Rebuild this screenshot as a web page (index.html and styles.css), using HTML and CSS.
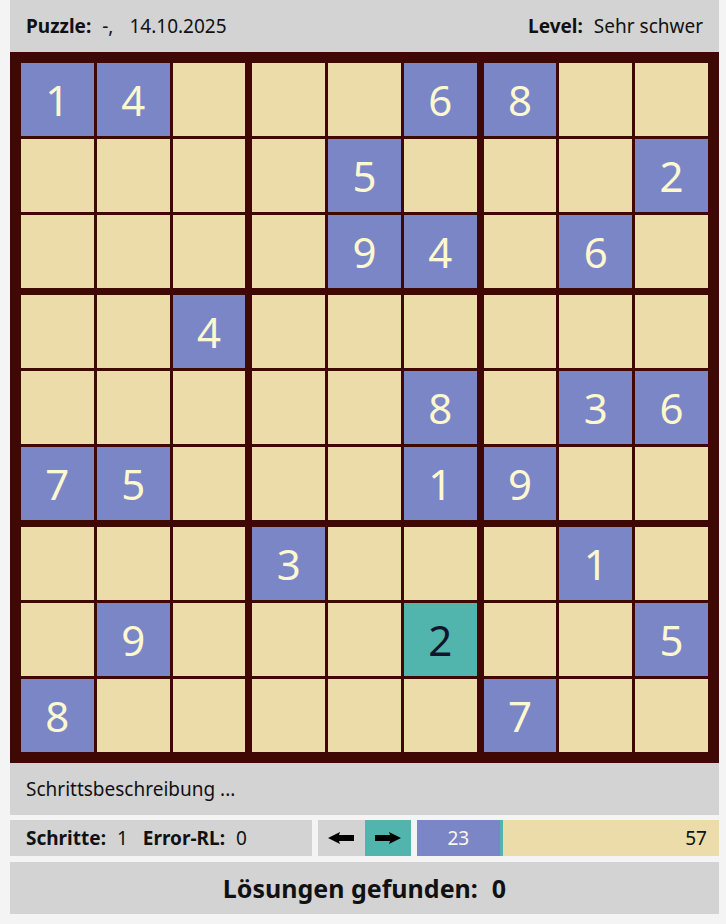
FILE: index.html
```html
<!DOCTYPE html>
<html lang="de">
<head>
<meta charset="utf-8">
<title>Sudoku</title>
<link rel="stylesheet" href="styles.css">
</head>
<body>
<div class="app">
  <header class="bar header">
    <div><b>Puzzle:</b><span class="val">-,</span><span class="val wide">14.10.2025</span></div>
    <div><b>Level:</b><span class="val">Sehr schwer</span></div>
  </header>

  <div class="board">
    <div class="box">
      <div class="cell given">1</div><div class="cell given">4</div><div class="cell"></div>
      <div class="cell"></div><div class="cell"></div><div class="cell"></div>
      <div class="cell"></div><div class="cell"></div><div class="cell"></div>
    </div>
    <div class="box">
      <div class="cell"></div><div class="cell"></div><div class="cell given">6</div>
      <div class="cell"></div><div class="cell given">5</div><div class="cell"></div>
      <div class="cell"></div><div class="cell given">9</div><div class="cell given">4</div>
    </div>
    <div class="box">
      <div class="cell given">8</div><div class="cell"></div><div class="cell"></div>
      <div class="cell"></div><div class="cell"></div><div class="cell given">2</div>
      <div class="cell"></div><div class="cell given">6</div><div class="cell"></div>
    </div>
    <div class="box">
      <div class="cell"></div><div class="cell"></div><div class="cell given">4</div>
      <div class="cell"></div><div class="cell"></div><div class="cell"></div>
      <div class="cell given">7</div><div class="cell given">5</div><div class="cell"></div>
    </div>
    <div class="box">
      <div class="cell"></div><div class="cell"></div><div class="cell"></div>
      <div class="cell"></div><div class="cell"></div><div class="cell given">8</div>
      <div class="cell"></div><div class="cell"></div><div class="cell given">1</div>
    </div>
    <div class="box">
      <div class="cell"></div><div class="cell"></div><div class="cell"></div>
      <div class="cell"></div><div class="cell given">3</div><div class="cell given">6</div>
      <div class="cell given">9</div><div class="cell"></div><div class="cell"></div>
    </div>
    <div class="box">
      <div class="cell"></div><div class="cell"></div><div class="cell"></div>
      <div class="cell"></div><div class="cell given">9</div><div class="cell"></div>
      <div class="cell given">8</div><div class="cell"></div><div class="cell"></div>
    </div>
    <div class="box">
      <div class="cell given">3</div><div class="cell"></div><div class="cell"></div>
      <div class="cell"></div><div class="cell"></div><div class="cell current">2</div>
      <div class="cell"></div><div class="cell"></div><div class="cell"></div>
    </div>
    <div class="box">
      <div class="cell"></div><div class="cell given">1</div><div class="cell"></div>
      <div class="cell"></div><div class="cell"></div><div class="cell given">5</div>
      <div class="cell given">7</div><div class="cell"></div><div class="cell"></div>
    </div>
  </div>

  <div class="bar desc">Schrittsbeschreibung ...</div>

  <div class="controls">
    <div class="bar stats"><b>Schritte:</b><span class="val">1</span><b class="lbl">Error-RL:</b><span class="val">0</span></div>
    <div class="nav">
      <button class="navbtn prev" type="button" aria-label="zurück">
        <svg width="26" height="12" viewBox="0 0 26 12"><path d="M0 6 L12 0 L11 3 L26 3 L26 9 L11 9 L12 12 Z" fill="#000"/></svg>
      </button>
      <button class="navbtn next" type="button" aria-label="weiter">
        <svg width="26" height="12" viewBox="0 0 26 12"><path d="M26 6 L14 0 L15 3 L0 3 L0 9 L15 9 L14 12 Z" fill="#000"/></svg>
      </button>
    </div>
    <div class="progress">
      <div class="prog-done">23</div>
      <div class="prog-rest">57</div>
    </div>
  </div>

  <div class="bar result"><b>Lösungen gefunden:</b><b class="val">0</b></div>
</div>
</body>
</html>
```

FILE: styles.css
```css
html, body {
  margin: 0;
  padding: 0;
  background: #f4f4f4;
}
body {
  font-family: "Noto Sans", "Open Sans", sans-serif;
  color: #111;
}
.app {
  width: 709px;
  margin-left: 10px;
  display: flex;
  flex-direction: column;
}
.bar {
  background: #d3d3d3;
  font-size: 19px;
}
.val {
  margin-left: 11px;
}
.val.wide {
  margin-left: 16px;
}
.lbl {
  margin-left: 15px;
}
.header {
  height: 52px;
  display: flex;
  justify-content: space-between;
  align-items: center;
  padding: 0 16px;
  box-sizing: border-box;
}
.header b, .stats b {
  font-weight: 700;
}
.board {
  background: #400804;
  padding: 11px;
  display: grid;
  grid-template-columns: repeat(3, 1fr);
  gap: 7px;
}
.box {
  display: grid;
  grid-template-columns: repeat(3, 1fr);
  grid-auto-rows: 73px;
  gap: 3px;
}
.cell {
  background: #ebdcaa;
  display: flex;
  align-items: center;
  justify-content: center;
  font-size: 42px;
  line-height: 1;
}
.cell.given {
  background: #7b86c7;
  color: #fdf8cf;
}
.cell.current {
  background: #52b5ad;
  color: #12142a;
}
.desc {
  height: 52px;
  display: flex;
  align-items: center;
  padding: 0 16px;
}
.controls {
  margin-top: 5px;
  height: 36px;
  display: flex;
  gap: 6px;
}
.stats {
  width: 302px;
  display: flex;
  align-items: center;
  padding: 0 16px;
  box-sizing: border-box;
}
.nav {
  display: flex;
  width: 93px;
}
.navbtn {
  flex: 1;
  border: 0;
  margin: 0;
  padding: 0;
  display: flex;
  align-items: center;
  justify-content: center;
  background: #d3d3d3;
}
.navbtn.next {
  background: #52b5ad;
}
.progress {
  flex: 1;
  display: flex;
  font-size: 19px;
}
.prog-done {
  flex: 23;
  background: #7b86c7;
  color: #fdf8e8;
  border-right: 3px solid #52b5ad;
  display: flex;
  align-items: center;
  justify-content: center;
}
.prog-rest {
  flex: 57;
  background: #ebdcaa;
  display: flex;
  align-items: center;
  justify-content: flex-end;
  padding-right: 12px;
}
.result {
  margin-top: 6px;
  height: 52px;
  display: flex;
  align-items: center;
  justify-content: center;
  font-size: 25px;
}
.result .val {
  margin-left: 14px;
}
```
